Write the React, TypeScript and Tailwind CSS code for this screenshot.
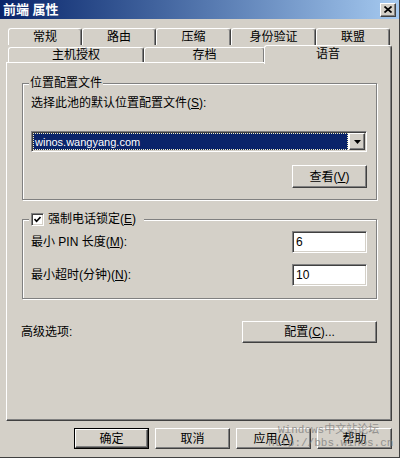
import React from "react";

const raised =
  "border border-t-white border-l-white border-r-[#404040] border-b-[#404040] shadow-[inset_-1px_-1px_0_#808080]";
const sunken =
  "border border-t-[#808080] border-l-[#808080] border-r-white border-b-white shadow-[inset_1px_1px_0_#404040,inset_-1px_-1px_0_#d4d0c8]";
const etched = "border border-[#808080] shadow-[inset_1px_1px_0_#fff,1px_1px_0_#fff]";

type TabProps = { label: string; className: string };

const Tab = ({ label, className }: TabProps) => (
  <div
    className={`flex items-center justify-center rounded-t-[3px] border-l border-t border-r border-l-white border-t-white border-r-[#404040] shadow-[inset_-1px_0_0_#808080] ${className}`}
  >
    {label}
  </div>
);

const Btn = ({ children, className }: { children: React.ReactNode; className: string }) => (
  <div className={`flex items-center justify-center bg-[#d4d0c8] ${raised} ${className}`}>{children}</div>
);

const U = ({ children }: { children: React.ReactNode }) => <span className="underline">{children}</span>;

export default function App() {
  return (
    <div className="relative w-[400px] h-[458px] overflow-hidden bg-[#d4d0c8] border-r border-b border-r-[#404040] border-b-[#404040] font-['Liberation_Sans','Noto_Sans_CJK_SC',sans-serif] text-[12px] leading-[14px] text-black">
      {/* Title bar */}
      <div className="h-[19px] flex items-center justify-between px-[3px] bg-linear-to-r from-[#0a246a] to-[#a6caf0]">
        <span className="font-bold text-white text-[13px]">前端 属性</span>
        <div className={`w-[16px] h-[14px] flex items-center justify-center bg-[#d4d0c8] ${raised}`}>
          <svg width="8" height="7" viewBox="0 0 8 7">
            <path d="M0.5 0.5 L7.5 6.5 M7.5 0.5 L0.5 6.5" stroke="#000" strokeWidth="1.7" />
          </svg>
        </div>
      </div>

      {/* Tabs */}
      <div className="mt-[9px] flex h-[17px] pl-[8px]">
        <Tab label="常规" className="w-[74px] h-full" />
        <Tab label="路由" className="w-[74px] h-full" />
        <Tab label="压缩" className="w-[75px] h-full" />
        <Tab label="身份验证" className="w-[85px] h-full" />
        <Tab label="联盟" className="w-[74px] h-full" />
      </div>
      <div className="flex h-[17px] items-start pl-[8px]">
        <Tab label="主机授权" className="w-[136px] h-[15px] mt-[2px]" />
        <Tab label="存档" className="w-[121px] h-[15px] mt-[2px]" />
        <Tab label="语音" className="relative z-10 -ml-[1px] w-[128px] h-[19px] pb-[3px] bg-[#d4d0c8]" />
      </div>

      {/* Panel */}
      <div className="ml-[6px] w-[386px] h-[359px] border border-t-white border-l-white border-r-[#404040] border-b-[#404040] shadow-[inset_-1px_-1px_0_#808080] pt-[13px] pl-[15px]">
        <fieldset className={`w-[355px] pl-[8px] pr-[9px] pb-[11px] ${etched}`}>
          <legend className="-ml-[2px] px-[1px] bg-[#d4d0c8]">位置配置文件</legend>
          <div className="mt-[6px]">
            选择此池的默认位置配置文件(<U>S</U>):
          </div>
          <div className={`mt-[21px] w-[336px] h-[21px] flex gap-[1px] p-[1px] bg-white ${sunken}`}>
            <div className="flex-1 flex items-center pl-[1px] bg-[#0a246a] border border-dotted border-[#f4f0c0] text-white text-[11px]">
              winos.wangyang.com
            </div>
            <div className={`w-[16px] flex items-center justify-center bg-[#d4d0c8] ${raised}`}>
              <svg width="7" height="4" viewBox="0 0 7 4">
                <polygon points="0,0 7,0 3.5,4" fill="#000" />
              </svg>
            </div>
          </div>
          <div className="mt-[13px] flex justify-end">
            <Btn className="w-[75px] h-[23px]">
              查看(<U>V</U>)
            </Btn>
          </div>
        </fieldset>

        <fieldset className={`mt-[12px] w-[355px] pl-[8px] pr-[9px] pb-[12px] ${etched}`}>
          <legend className="-ml-[2px] pl-[2px] pr-[8px] flex items-center gap-[4px] bg-[#d4d0c8]">
            <span className={`w-[13px] h-[13px] flex items-center justify-center bg-white ${sunken}`}>
              <svg width="7" height="7" viewBox="0 0 7 7">
                <path d="M0.5 3 L2.6 5.3 L6.5 1" stroke="#000" strokeWidth="1.6" fill="none" />
              </svg>
            </span>
            <span>
              强制电话锁定(<U>E</U>)
            </span>
          </legend>
          <div className="mt-[5px] h-[22px] flex items-center justify-between">
            <span>
              最小 PIN 长度(<U>M</U>):
            </span>
            <div className={`w-[75px] h-[22px] flex items-center pl-[3px] bg-white ${sunken}`}>6</div>
          </div>
          <div className="mt-[11px] h-[22px] flex items-center justify-between">
            <span>
              最小超时(分钟)(<U>N</U>):
            </span>
            <div className={`w-[75px] h-[22px] flex items-center pl-[3px] bg-white ${sunken}`}>10</div>
          </div>
        </fieldset>

        <div className="mt-[22px] -ml-[1px] w-[356px] h-[22px] flex items-center justify-between">
          <span>高级选项:</span>
          <Btn className="w-[135px] h-[22px]">
            配置(<U>C</U>)...
          </Btn>
        </div>
      </div>

      {/* Dialog buttons */}
      <div className="mt-[7px] flex justify-end gap-[6px] pr-[7px]">
        <div className="w-[75px] h-[21px] flex border border-black">
          <Btn className="flex-1">确定</Btn>
        </div>
        <Btn className="w-[75px] h-[21px]">取消</Btn>
        <Btn className="w-[75px] h-[21px]">
          应用(<U>A</U>)
        </Btn>
        <Btn className="w-[75px] h-[21px]">帮助</Btn>
      </div>

      {/* Watermark */}
      <div className="pointer-events-none absolute left-[268px] top-[424px] font-['Liberation_Mono','Noto_Sans_CJK_SC',monospace] text-[11px] leading-[13px] text-[#7c7c7c] opacity-75">
        <div className="ml-[10px]">Windows中文站论坛</div>
        <div>http://bbs.winos.cn</div>
      </div>
    </div>
  );
}
